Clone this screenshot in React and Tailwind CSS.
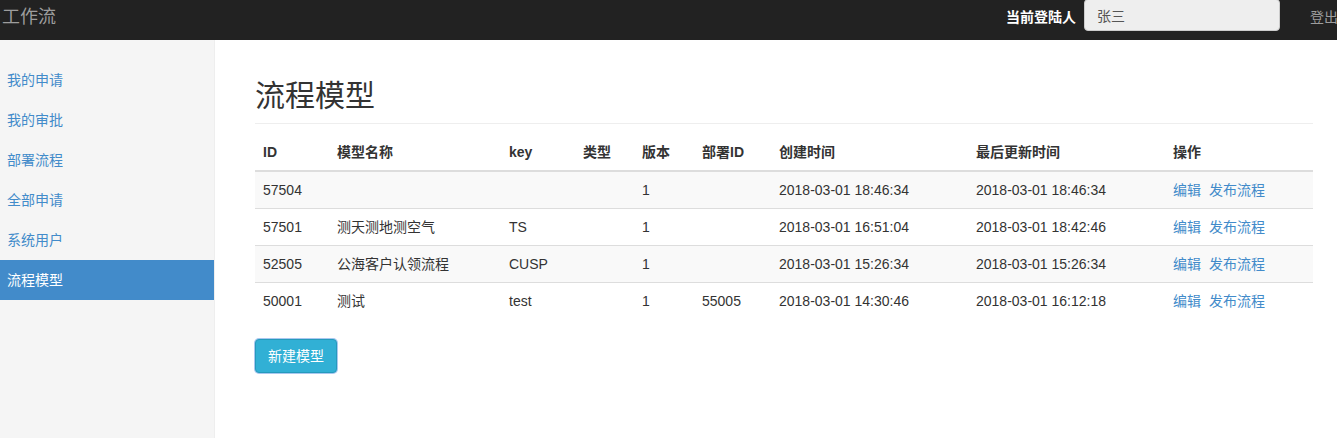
import React from 'react';

const rows = [
  { id: '57504', name: '', key: '', type: '', ver: '1', dep: '', created: '2018-03-01 18:46:34', updated: '2018-03-01 18:46:34' },
  { id: '57501', name: '测天测地测空气', key: 'TS', type: '', ver: '1', dep: '', created: '2018-03-01 16:51:04', updated: '2018-03-01 18:42:46' },
  { id: '52505', name: '公海客户认领流程', key: 'CUSP', type: '', ver: '1', dep: '', created: '2018-03-01 15:26:34', updated: '2018-03-01 15:26:34' },
  { id: '50001', name: '测试', key: 'test', type: '', ver: '1', dep: '55005', created: '2018-03-01 14:30:46', updated: '2018-03-01 16:12:18' },
];

const menu = ['我的申请', '我的审批', '部署流程', '全部申请', '系统用户', '流程模型'];

const cols = [
  { label: 'ID', w: 'w-[74px]' },
  { label: '模型名称', w: 'w-[172px]' },
  { label: 'key', w: 'w-[74px]' },
  { label: '类型', w: 'w-[59px]' },
  { label: '版本', w: 'w-[60px]' },
  { label: '部署ID', w: 'w-[77px]' },
  { label: '创建时间', w: 'w-[197px]' },
  { label: '最后更新时间', w: 'w-[197px]' },
  { label: '操作', w: 'w-[148px]' },
];

function Navbar() {
  return (
    <div className="h-10 bg-[#222222] flex items-start overflow-hidden">
      <div className="pl-[2px] pt-[3px] text-[18px] leading-[28px] text-[#9d9d9d]">工作流</div>
      <div className="ml-auto flex items-start">
        <span className="mt-[7px] text-[14px] leading-[20px] font-bold text-white">当前登陆人</span>
        <div className="ml-2 w-[196px] h-[32px] -mt-[1px] bg-[#eeeeee] border border-[#cccccc] rounded-[4px] pl-3 pt-[6px] text-[14px] leading-[20px] text-[#555555]">
          张三
        </div>
        <span className="ml-[30px] mt-[7px] text-[14px] leading-[20px] text-[#9d9d9d] whitespace-nowrap w-[27px] overflow-hidden">登出</span>
      </div>
    </div>
  );
}

function Sidebar() {
  return (
    <div className="w-[215px] shrink-0 bg-[#f5f5f5] border-r border-[#eeeeee] pt-5 min-h-[398px]">
      {menu.map((m) => (
        <div
          key={m}
          className={
            m === '流程模型'
              ? 'h-10 pl-[7px] pt-[10px] leading-[20px] text-[14px] bg-[#428bca] text-white'
              : 'h-10 pl-[7px] pt-[10px] leading-[20px] text-[14px] text-[#428bca]'
          }
        >
          {m}
        </div>
      ))}
    </div>
  );
}

function App() {
  return (
    <div className="w-[1337px] h-[438px] overflow-hidden bg-white text-[#333333] font-['Liberation_Sans','Noto_Sans_CJK_SC',sans-serif]">
      <Navbar />
      <div className="flex">
        <Sidebar />
        <div className="pl-10 pr-6 flex-1">
          <h1 className="mt-[38px] pb-[9px] text-[30px] leading-[36px] font-normal text-[#333333] border-b border-[#eeeeee]">流程模型</h1>
          <table className="mt-[10px] w-[1058px] table-fixed border-collapse text-[14px]">
            <thead>
              <tr>
                {cols.map((c) => (
                  <th key={c.label} className={`${c.w} text-left font-bold px-2 py-2 leading-[20px] border-b-2 border-[#dddddd]`}>
                    {c.label}
                  </th>
                ))}
              </tr>
            </thead>
            <tbody>
              {rows.map((r, i) => (
                <tr key={r.id} className={i % 2 === 0 ? 'bg-[#f9f9f9]' : 'bg-white'}>
                  {[r.id, r.name, r.key, r.type, r.ver, r.dep, r.created, r.updated].map((v, j) => (
                    <td key={j} className={`px-2 py-2 leading-[20px] whitespace-nowrap ${i > 0 ? 'border-t border-[#dddddd]' : ''}`}>{v}</td>
                  ))}
                  <td className={`px-2 py-2 leading-[20px] whitespace-nowrap text-[#428bca] ${i > 0 ? 'border-t border-[#dddddd]' : ''}`}>
                    编辑<span className="ml-2">发布流程</span>
                  </td>
                </tr>
              ))}
            </tbody>
          </table>
          <button className="mt-5 h-[34px] px-3 bg-[#31b0d5] border border-[#269abc] rounded-[4px] text-white text-[14px] leading-[20px] ring-1 ring-[#a8c8f0]">
            新建模型
          </button>
        </div>
      </div>
    </div>
  );
}

export default App;
